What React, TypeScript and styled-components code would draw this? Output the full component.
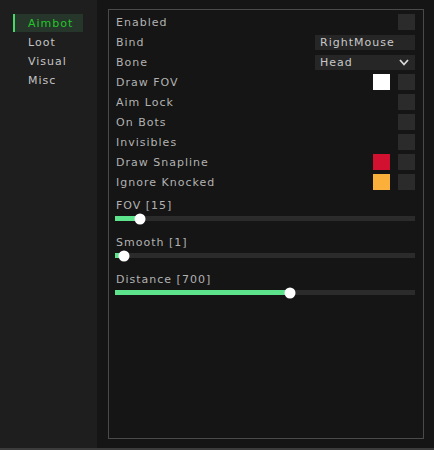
import React from "react"
import styled, { createGlobalStyle } from "styled-components"

const GlobalStyle = createGlobalStyle`
  html, body {
    margin: 0;
    padding: 0;
    background: #151515;
  }
  body {
    font-family: "DejaVu Sans", Verdana, sans-serif;
    font-size: 11px;
    letter-spacing: 1px;
  }
`

const Window = styled.div`
  display: flex;
  flex-direction: column;
  width: 434px;
  height: 450px;
  overflow: hidden;
`

const Body = styled.div`
  display: flex;
  flex: 1;
  min-height: 0;
`

const BottomBar = styled.div`
  height: 2px;
  background: #3c3c3c;
`

const Sidebar = styled.div`
  display: flex;
  flex-direction: column;
  gap: 1px;
  width: 84px;
  padding: 14px 0 0 13px;
  background: #1e1e1e;
`

const Tab = styled.div<{ $active?: boolean }>`
  display: flex;
  align-items: center;
  width: 70px;
  height: 18px;
  box-sizing: border-box;
  color: ${(p) => (p.$active ? "#25c42b" : "#c4c4c4")};
  background: ${(p) => (p.$active ? "#27362a" : "transparent")};
  border-left: 2px solid ${(p) => (p.$active ? "#45d866" : "transparent")};
  padding-left: 13px;
`

const Main = styled.div`
  flex: 1;
  display: flex;
  padding: 9px 10px 9px 11px;
  background: #151515;
`

const Panel = styled.div`
  flex: 1;
  display: flex;
  flex-direction: column;
  border: 1px solid #4a4a4a;
  padding: 2px 8px 0 6px;
`

const Row = styled.div`
  display: flex;
  align-items: center;
  height: 20px;
  gap: 8px;
  padding-left: 1px;
`

const Label = styled.span`
  flex: 1;
  color: #b2b2b2;
`

const CheckBox = styled.div`
  width: 17px;
  height: 16px;
  background: #2b2b2b;
`

const Swatch = styled.div<{ $color: string }>`
  width: 17px;
  height: 16px;
  background: ${(p) => p.$color};
`

const Field = styled.div`
  display: flex;
  align-items: center;
  justify-content: space-between;
  width: 100px;
  height: 15px;
  box-sizing: border-box;
  padding: 0 6px 0 5px;
  background: #262626;
  color: #c8c8c8;
`

const SliderBlock = styled.div`
  display: flex;
  flex-direction: column;
  gap: 3px;
  margin-top: 7px;
  margin-bottom: 8px;
`

const SliderLabel = styled.span`
  height: 14px;
  line-height: 14px;
  padding-left: 1px;
  color: #b2b2b2;
`

const Track = styled.div`
  position: relative;
  height: 5px;
  background: #2b2b2b;
`

const Fill = styled.div`
  height: 100%;
  background: #5ce38c;
`

const Knob = styled.div`
  position: absolute;
  top: 50%;
  width: 11px;
  height: 11px;
  border-radius: 50%;
  background: #ffffff;
  transform: translate(-50%, -50%);
`

const Chevron = () => (
  <svg width="10" height="7" viewBox="0 0 10 7">
    <polyline
      points="1,1 5,5.5 9,1"
      fill="none"
      stroke="#d8d8d8"
      strokeWidth="1.8"
    />
  </svg>
)

const Slider: React.FC<{ label: string; px: number }> = ({ label, px }) => (
  <SliderBlock>
    <SliderLabel>{label}</SliderLabel>
    <Track>
      <Fill style={{ width: px }} />
      <Knob style={{ left: px }} />
    </Track>
  </SliderBlock>
)

const toggles: { label: string; color?: string }[] = [
  { label: "Draw FOV", color: "#ffffff" },
  { label: "Aim Lock" },
  { label: "On Bots" },
  { label: "Invisibles" },
  { label: "Draw Snapline", color: "#d2102f" },
  { label: "Ignore Knocked", color: "#fbb03c" },
]

const App: React.FC = () => {
  return (
    <Window>
      <GlobalStyle />
      <Body>
        <Sidebar>
          <Tab $active>Aimbot</Tab>
          <Tab>Loot</Tab>
          <Tab>Visual</Tab>
          <Tab>Misc</Tab>
        </Sidebar>
        <Main>
          <Panel>
            <Row>
              <Label>Enabled</Label>
              <CheckBox />
            </Row>
            <Row>
              <Label>Bind</Label>
              <Field>RightMouse</Field>
            </Row>
            <Row>
              <Label>Bone</Label>
              <Field>
                Head
                <Chevron />
              </Field>
            </Row>
            {toggles.map((t) => (
              <Row key={t.label}>
                <Label>{t.label}</Label>
                {t.color && <Swatch $color={t.color} />}
                <CheckBox />
              </Row>
            ))}
            <Slider label="FOV [15]" px={25} />
            <Slider label="Smooth [1]" px={9} />
            <Slider label="Distance [700]" px={175} />
          </Panel>
        </Main>
      </Body>
      <BottomBar />
    </Window>
  )
}

export default App
